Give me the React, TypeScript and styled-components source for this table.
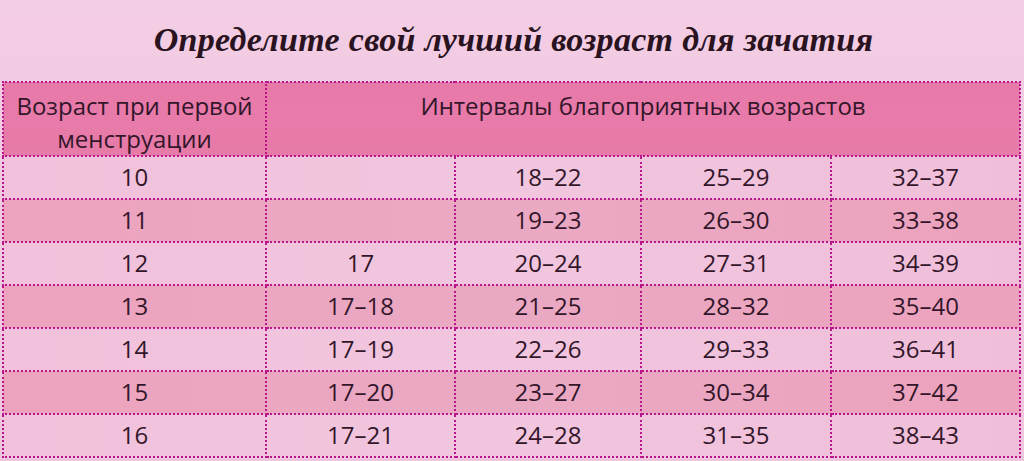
import React from "react";
import styled, { createGlobalStyle } from "styled-components";

const Global = createGlobalStyle`
  html, body { margin: 0; padding: 0; background: #f1c9e2; }
  body { width: 1024px; height: 461px; overflow: hidden; }
`;

const Page = styled.div`
  width: 1024px;
  height: 461px;
  background: linear-gradient(180deg, #f3cde4 0%, #f0c6df 100%);
  display: flex;
  flex-direction: column;
  padding: 0 3px 0 2px;
  box-sizing: border-box;
`;

const Title = styled.h1`
  margin: 0;
  flex: 0 0 81px;
  display: flex;
  align-items: center;
  justify-content: center;
  padding: 0 0 2px 4px;
  box-sizing: border-box;
  font-family: "Liberation Serif", "DejaVu Serif", serif;
  font-style: italic;
  font-weight: 700;
  font-size: 34px;
  color: #2a1320;
  letter-spacing: 0.3px;
`;

const Table = styled.table`
  width: 100%;
  flex: 0 0 auto;
  border-collapse: collapse;
  table-layout: fixed;
  font-family: "Open Sans", "Noto Sans", sans-serif;
  color: #33162a;
`;

const Col = styled.col<{ $w?: number }>`
  width: ${(p) => (p.$w ? `${p.$w}px` : "auto")};
`;

const border = "2px dotted #b8168a";

const HeadCell = styled.th`
  background: linear-gradient(180deg, #e87aa9 0%, #e77ba8 100%);
  border: ${border};
  height: 67px;
  box-sizing: border-box;
  vertical-align: top;
  padding: 6px 4px 0;
  font-weight: 400;
  font-size: 24px;
  line-height: 33px;
  text-align: center;
  white-space: nowrap;
`;

const Row = styled.tr<{ $dark: boolean }>`
  height: 43px;
  background: ${(p) =>
    p.$dark
      ? "linear-gradient(90deg, #eda3be 0%, #eaa9c3 50%, #eca2bd 100%)"
      : "linear-gradient(90deg, #f2c1db 0%, #f1c6de 50%, #f0bed9 100%)"};
`;

const Cell = styled.td`
  border: ${border};
  text-align: center;
  vertical-align: middle;
  font-size: 24px;
  padding: 0 0 2px;
  line-height: 1;
`;

const rows: [string, string, string, string, string][] = [
  ["10", "", "18–22", "25–29", "32–37"],
  ["11", "", "19–23", "26–30", "33–38"],
  ["12", "17", "20–24", "27–31", "34–39"],
  ["13", "17–18", "21–25", "28–32", "35–40"],
  ["14", "17–19", "22–26", "29–33", "36–41"],
  ["15", "17–20", "23–27", "30–34", "37–42"],
  ["16", "17–21", "24–28", "31–35", "38–43"],
];

export default function App() {
  return (
    <>
      <Global />
      <Page>
        <Title>Определите свой лучший возраст для зачатия</Title>
        <Table>
          <colgroup>
            <Col $w={263} />
            <Col $w={189} />
            <Col $w={186} />
            <Col $w={190} />
            <Col />
          </colgroup>
          <thead>
            <tr>
              <HeadCell>
                Возраст при первой
                <br />
                менструации
              </HeadCell>
              <HeadCell colSpan={4}>Интервалы благоприятных возрастов</HeadCell>
            </tr>
          </thead>
          <tbody>
            {rows.map((r, i) => (
              <Row key={r[0]} $dark={i % 2 === 1}>
                {r.map((c, j) => (
                  <Cell key={j}>{c}</Cell>
                ))}
              </Row>
            ))}
          </tbody>
        </Table>
      </Page>
    </>
  );
}
